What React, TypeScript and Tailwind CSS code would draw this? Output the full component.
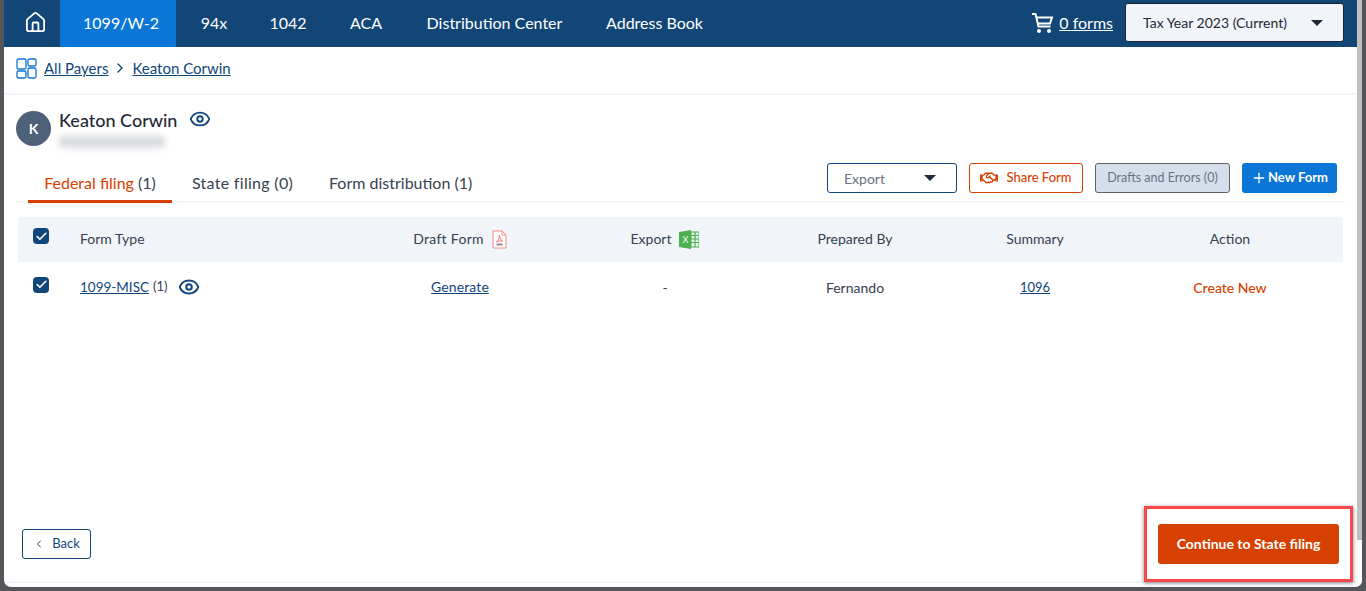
import { ChevronRight, ChevronLeft, Check, Eye, Home, Plus } from "lucide-react";
import { FaRegHandshake } from "react-icons/fa";

const font = { fontFamily: "Lato, 'Noto Sans', sans-serif" };

const navItems = [
  { label: "1099/W-2", cls: "w-[116px] pl-[6px] bg-[#0b76d6]" },
  { label: "94x", cls: "w-[76px]" },
  { label: "1042", cls: "w-[72px]" },
  { label: "ACA", cls: "w-[84px]" },
  { label: "Distribution Center", cls: "w-[173px]" },
  { label: "Address Book", cls: "w-[147px]" },
];

const columns = "grid-cols-[62px_270px_220px_190px_190px_170px_1fr]";

function Checkbox() {
  return (
    <span className="flex h-4 w-4 items-center justify-center rounded-sm bg-[#11467a]">
      <Check size={13} strokeWidth={3} className="text-white" />
    </span>
  );
}

function CartIcon() {
  return (
    <svg width="23" height="22" viewBox="0 0 23 22" fill="none" stroke="#fff" strokeWidth="2">
      <path d="M1 2h3.500l3 12.500h12" />
      <path d="M5.500 5.500h15.500l-2 6H7" />
      <circle cx="8" cy="19" r="2" fill="#fff" stroke="none" />
      <circle cx="18" cy="19" r="2" fill="#fff" stroke="none" />
    </svg>
  );
}

function PayersIcon() {
  return (
    <svg width="21" height="21" viewBox="0 0 21 21" fill="none" stroke="#0b76d6" strokeWidth="1.300" className="mr-[7px]">
      <rect x="1" y="1" width="9" height="10" rx="1.500" />
      <rect x="12" y="1" width="8" height="7" rx="1.500" />
      <rect x="1" y="13" width="9" height="7" rx="1.500" />
      <rect x="12" y="10" width="8" height="10" rx="1.500" />
    </svg>
  );
}

function PdfIcon() {
  return (
    <svg width="15" height="19" viewBox="0 0 15 19" fill="none">
      <path d="M1 1h9l4 4v13H1z" fill="#fff" stroke="#f28b82" strokeWidth="1" />
      <path d="M10 1v4h4" stroke="#f28b82" strokeWidth="1" />
      <path d="M7.500 5c-.6 2 .1 4-3 7 2-1 4-1.500 6-1-2-1-3-4-3-6z" stroke="#ef5350" strokeWidth=".8" />
      <rect x="4.500" y="13.500" width="6" height="2" fill="#9a8a8a" />
    </svg>
  );
}

function ExcelIcon() {
  return (
    <svg width="20" height="19" viewBox="0 0 20 19">
      <path d="M0 2l12-2v19L0 17z" fill="#4caf50" />
      <path d="M12 2h8v15h-8z" fill="#e8f5e9" stroke="#4caf50" strokeWidth="1" />
      <path d="M12 5.500h8M12 9h8M12 12.500h8M16 2v15" stroke="#4caf50" strokeWidth="1.200" />
      <text x="3.500" y="13" fontSize="9" fill="#fff" fontFamily="Lato, sans-serif">X</text>
    </svg>
  );
}

export default function App() {
  return (
    <div style={font} className="h-[591px] w-[1366px] overflow-hidden bg-[#55565a] px-[4px] pb-[4px]">
      <div className="flex h-full overflow-hidden rounded-b-[7px] bg-white">
        <div className="flex min-w-0 flex-1 flex-col">
          {/* top nav */}
          <header className="flex h-[47px] shrink-0 items-center bg-[#114677] pb-[2px] pr-[13px] text-white">
            <div className="flex w-[56px] justify-center pl-[6px]">
              <Home size={23} strokeWidth={1.900} />
            </div>
            {navItems.map((n) => (
              <div key={n.label} className={`-mb-[2px] flex h-[47px] items-center justify-center pb-[2px] text-[16px] ${n.cls}`}>
                {n.label}
              </div>
            ))}
            <div className="ml-auto flex items-center gap-[5px]">
              <CartIcon />
              <a className="text-[16px] underline">0 forms</a>
            </div>
            <div className="ml-[12px] flex h-[39px] w-[219px] items-center justify-between rounded-[3px] border border-[#1b2430] bg-[#f1f4f9] pl-[17px] pr-[20px] text-[14px] text-[#1f2937]">
              Tax Year 2023 (Current)
              <span className="h-0 w-0 border-x-[6px] border-t-[6px] border-x-transparent border-t-[#1f2937]" />
            </div>
          </header>

          {/* breadcrumb */}
          <div className="flex h-[48px] shrink-0 items-center border-b-2 border-[#f1f4f9] pb-[4px] pl-[12px] text-[15px] text-[#11467a]">
            <PayersIcon />
            <a className="underline">All Payers</a>
            <ChevronRight size={16} className="mx-[4px]" />
            <a className="underline">Keaton Corwin</a>
          </div>

          {/* payer */}
          <div className="flex items-start pl-[12px] pt-[15px]">
            <div className="mt-[1px] flex h-[35px] w-[35px] items-center justify-center rounded-full bg-[#4f6079] text-[14px] font-bold text-white">
              K
            </div>
            <div className="-mt-[2px] ml-[8px]">
              <div className="flex items-center gap-[12px] text-[18px] font-medium leading-[22px] text-[#1f2937]">
                Keaton Corwin
                <Eye size={22} strokeWidth={2} className="mb-[2px] text-[#11467a]" />
              </div>
              <div className="mt-[4px] h-[12px] w-[106px] rounded-sm bg-[#d9dbdf] blur-[3px]" />
            </div>
          </div>

          {/* tabs */}
          <div className="mx-[12px] mt-[14px] flex h-[41px] shrink-0 items-end border-b-2 border-[#f1f4f9]">
            <div className="-mb-[2px] ml-[12px] flex h-[37px] w-[144px] items-center justify-center border-b-[3px] border-[#d64000] text-[16px] text-[#d64000]">
              Federal filing&nbsp;<span className="text-[#374151]">(1)</span>
            </div>
            <div className="-mb-[2px] flex h-[37px] w-[141px] items-center justify-center pb-[3px] text-[16px] tracking-[0.3px] text-[#374151]">State filing (0)</div>
            <div className="-mb-[2px] flex h-[37px] items-center pb-[3px] pl-[16px] text-[16px] text-[#374151]">Form distribution (1)</div>
            <div className="mb-[8px] ml-auto mr-[8px] flex items-center">
              <div className="flex h-[30px] w-[130px] items-center justify-between rounded-[3px] border border-[#11467a] pl-[16px] pr-[20px] text-[14px] text-[#6b7280]">
                Export
                <span className="h-0 w-0 border-x-[6px] border-t-[6px] border-x-transparent border-t-[#1f2937]" />
              </div>
              <div className="ml-[12px] flex h-[30px] w-[114px] items-center justify-center gap-[8px] rounded-[3px] border border-[#d64000] text-[13px] font-medium text-[#d64000]">
                <FaRegHandshake size={18} />
                Share Form
              </div>
              <div className="ml-[12px] flex h-[30px] w-[135px] items-center justify-center rounded-[3px] border border-[#5f6368] bg-[#d5dfeb] text-[12.500px] text-[#6b7280]">
                Drafts and Errors (0)
              </div>
              <div className="ml-[12px] flex h-[30px] w-[95px] items-center justify-center gap-[1px] rounded-[3px] bg-[#0b76d6] text-[13px] font-bold text-white">
                <Plus size={16} />
                New Form
              </div>
            </div>
          </div>

          {/* table */}
          <div className="ml-[14px] mr-[14px] mt-[14px]">
            <div className={`grid h-[45px] items-center rounded-t-[3px] bg-[#f1f4f9] text-[14px] text-[#374151] ${columns}`}>
              <div className="flex pb-[7px] pl-[15px]"><Checkbox /></div>
              <div className="pb-[2px]">Form Type</div>
              <div className="flex items-center justify-center gap-[8px] tracking-[0.3px]"><span className="pb-[2px]">Draft Form</span> <PdfIcon /></div>
              <div className="flex items-center justify-center gap-[8px]"><span className="pb-[2px]">Export</span> <ExcelIcon /></div>
              <div className="pb-[2px] text-center">Prepared By</div>
              <div className="pb-[2px] text-center">Summary</div>
              <div className="pb-[2px] pr-[3px] text-center">Action</div>
            </div>
            <div className={`grid h-[50px] items-center text-[14px] text-[#374151] ${columns}`}>
              <div className="flex pb-[5px] pl-[15px]"><Checkbox /></div>
              <div className="flex items-center">
                <a className="text-[13.500px] text-[#11467a] underline">1099-MISC</a>
                <span className="ml-[4px] text-[13px]">(1)</span>
                <Eye size={22} strokeWidth={2.200} className="ml-[11px] text-[#11467a]" />
              </div>
              <div className="pb-[2px] text-center tracking-[0.1px] text-[#11467a] underline">Generate</div>
              <div className="text-center">-</div>
              <div className="text-center">Fernando</div>
              <div className="pt-[1px] text-center text-[13px] text-[#11467a] underline">1096</div>
              <div className="pr-[3px] text-center font-medium text-[#d64000]">Create New</div>
            </div>
          </div>

          {/* footer */}
          <div className="mb-[4px] ml-[2px] mt-auto flex h-[76px] shrink-0 items-center justify-between border-b-2 border-[#f1f4f9] pl-[16px] pr-[18px]">
            <div className="flex h-[30px] w-[69px] items-center justify-center gap-[7px] rounded-[3px] border border-[#11467a] text-[13px] text-[#11467a]">
              <ChevronLeft size={12} />
              Back
            </div>
            <div className="relative">
              <div className="flex h-[40px] w-[181px] items-center justify-center rounded-[3px] bg-[#d64000] pb-[2px] text-[14px] font-bold text-white">
                Continue to State filing
              </div>
              <div className="pointer-events-none absolute -inset-x-[14px] -inset-y-[18px] border-[3px] border-[#f9474b] shadow-[0_1px_4px_rgba(0,0,0,0.5)]" />
            </div>
          </div>
        </div>

        {/* scrollbar */}
        <div className="w-[5px] shrink-0 bg-white">
          <div className="h-[540px] bg-[#c1c1c1]" />
        </div>
      </div>
    </div>
  );
}
